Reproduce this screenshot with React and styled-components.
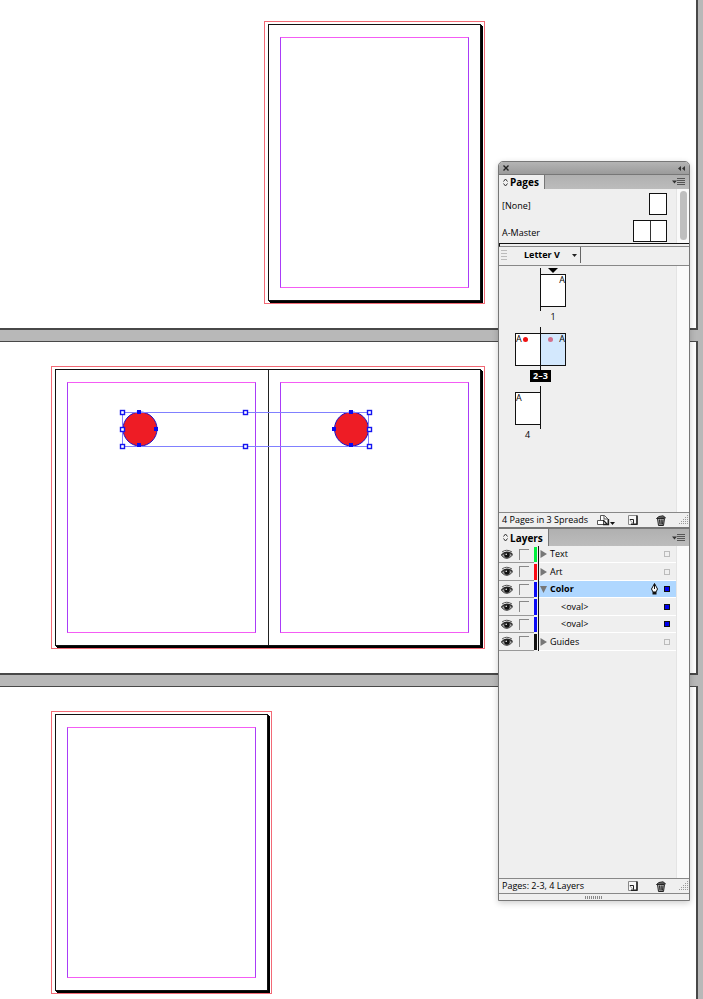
import React, { useState } from 'react';
import styled, { createGlobalStyle } from 'styled-components';

const GlobalStyle = createGlobalStyle`
  * {
    box-sizing: border-box;
  }

  body {
    margin: 0;
    background: #b8b8b8;
    color: #000;
    font-family: "Open Sans", "Noto Sans", sans-serif;
    font-size: 9px;
    line-height: 12px;
  }

  button, select {
    margin: 0;
    padding: 0;
    border: 0;
    background: none;
    color: inherit;
    font: inherit;
  }

  ul {
    margin: 0;
    padding: 0;
    list-style: none;
  }

  svg {
    display: block;
  }
`;

const Workspace = styled.div`
  position: relative;
  height: 100vh;
  overflow: hidden;
`;

const Pasteboards = styled.main`
  display: flex;
  flex-direction: column;
  gap: 11px;
  margin-right: 5px;
`;

const Pasteboard = styled.section`
  display: grid;
  grid-template-columns: 213px 213px;
  padding: ${({ $first }) => ($first ? '21px' : '24px')} 0 24px 51px;
  background: #fff;
  border: solid #484848;
  border-width: ${({ $first }) => ($first ? '0' : '1px')} 2px 2px 0;
`;

const Bleed = styled.div`
  grid-column: ${({ $column }) => $column};
  justify-self: start;
  display: flex;
  padding: 2px 3px;
  border: 1px solid #f26a76;
`;

const Spread = styled.div`
  display: flex;
  border: 1px solid #111;
  box-shadow: 1px 1px 0 #000, 2px 2px 0 #000;
`;

const Page = styled.div`
  padding: 12px 11px;

  & + & {
    border-left: 1px solid #222;
    margin-left: 1px;
  }
`;

const Margins = styled.div`
  width: 189px;
  height: 251px;
  border: 1px solid #f45cf4;
  border-left-color: #a93cf8;
  border-right-color: #a93cf8;
`;

const Selection = styled.svg`
  position: absolute;
  left: 118px;
  top: 407px;
`;

const Panels = styled.aside`
  position: absolute;
  top: 161px;
  right: 13px;
  width: 192px;
  background: #efefef;
  border: 1px solid #777;
  border-radius: 5px 5px 0 0;
  box-shadow: 0 2px 6px rgba(0, 0, 0, 0.2);
`;

const TitleBar = styled.header`
  display: flex;
  align-items: center;
  justify-content: space-between;
  height: 12px;
  padding: 0 4px;
  background: linear-gradient(#b4b4b4, #9b9b9b);
  border-radius: 4px 4px 0 0;
`;

const TabBar = styled.div`
  display: flex;
  align-items: stretch;
  justify-content: space-between;
  height: ${({ $tall }) => ($tall ? '19px' : '15px')};
  padding-right: 4px;
  background: linear-gradient(#b0b0b0, #bcbcbc);
  border-top: ${({ $tall }) => ($tall ? '2px' : '1px')} solid #777;
`;

const Tab = styled.button`
  display: flex;
  align-items: center;
  gap: 2px;
  padding: 0 5px 0 4px;
  background: #efefef;
  border-right: 1px solid #777;
  font-size: 10px;
  font-weight: bold;
`;

const ScrollArea = styled.div`
  display: grid;
  grid-template-columns: 1fr 13px;
  height: ${({ $height }) => $height};
`;

const Track = styled.div`
  padding: 2px 2px 3px 3px;
  background: #fafafa;
  border-left: 1px solid #e4e4e4;
`;

const Thumb = styled.div`
  width: 7px;
  height: 49px;
  border-radius: 4px;
  background: #bfbfbf;
`;

const MasterRow = styled.li`
  display: flex;
  align-items: center;
  justify-content: space-between;
  height: 27px;
  padding: 2px 9px 0 3px;
`;

const MasterName = styled.span`
  padding-top: 4px;
`;

const MasterIcon = styled.div`
  display: flex;
  background: #fff;
  border: 1px solid #111;

  span {
    width: 16px;
    height: 20px;
  }

  span + span {
    border-left: 1px solid #333;
  }
`;

const Splitter = styled.div`
  height: 4px;
  border-top: 1px solid #111;
  border-bottom: 1px solid #888;
  border-left: 1px solid #111;
`;

const SizeBar = styled.div`
  display: flex;
  align-items: center;
  height: 19px;
  padding: 0 0 2px 2px;
  border-bottom: 1px solid #888;
`;

const SizePicker = styled.label`
  display: flex;
  align-items: center;
  height: 16px;
  margin-left: 17px;
  padding-right: 3px;
  border-right: 1px solid #666;

  select {
    width: 48px;
    appearance: none;
    font-weight: bold;
    outline: 0;
  }
`;

const SpreadList = styled.ul`
  padding: 2px 0 0 16px;
`;

const SpreadItem = styled.li`
  display: grid;
  grid-template-columns: 25px 26px;
  grid-template-rows: 43px 12px;
  width: 51px;
  height: 59px;
`;

const PageCell = styled.div`
  grid-column: ${({ $recto }) => ($recto ? 2 : 1)};
  grid-row: 1;
  position: relative;
  padding: 6px 0 4px;
  border-left: ${({ $recto }) => ($recto ? '1px solid #111' : '0')};
  box-shadow: ${({ $recto }) => ($recto ? 'none' : '1px 0 0 #111')};
`;

const PageThumb = styled.div`
  display: flex;
  flex-direction: ${({ $recto }) => ($recto ? 'row-reverse' : 'row')};
  gap: ${({ $recto }) => ($recto ? '6px' : '1px')};
  height: 33px;
  line-height: 9px;
  background: ${({ $active }) => ($active ? '#d3e8fd' : '#fff')};
  border: solid #111;
  border-width: ${({ $recto }) => ($recto ? '1px 1px 1px 0' : '1px 0 1px 1px')};
`;

const Dot = styled.i`
  width: 5px;
  height: 5px;
  margin-top: 3px;
  border-radius: 50%;
  background: ${({ $color }) => $color};
`;

const StartMarker = styled.svg`
  position: absolute;
  left: 7px;
  top: 0;
`;

const SpreadLabel = styled.div`
  grid-column: ${({ $column }) => $column};
  grid-row: 2;
  justify-self: center;
  padding: 0 3px;
  line-height: 12px;
  color: ${({ $active }) => ($active ? '#fff' : '#000')};
  background: ${({ $active }) => ($active ? '#000' : 'none')};
  font-weight: ${({ $active }) => ($active ? 'bold' : 'normal')};
`;

const StatusBar = styled.footer`
  display: flex;
  align-items: center;
  height: 15px;
  padding: 0 0 0 3px;
  border-top: 1px solid #888;
`;

const Actions = styled.div`
  display: flex;
  align-items: center;
  margin-left: auto;
  gap: 13px;
`;

const TrashButton = styled.button`
  margin-left: 5px;
`;

const LayerItem = styled.li`
  display: grid;
  grid-template-columns: 35px 3px 1px 1fr;
  column-gap: 0;
  height: 17px;

  &:nth-child(even) {
    height: 18px;
  }
`;

const Toggles = styled.div`
  display: flex;
  align-items: center;
  gap: 6px;
  padding-left: 2px;
  border-bottom: 1px solid #999;
`;

const LockBox = styled.button`
  width: 10px;
  height: 11px;
  border: solid #888;
  border-width: 1px 0 0 1px;
`;

const Swatch = styled.span`
  margin: 1px 0;
  background: ${({ $color }) => $color};
`;

const Rule = styled.span`
  width: 1px;
  margin-left: 1px;
  background: #111;
`;

const LayerBody = styled.div`
  display: flex;
  align-items: center;
  gap: 3px;
  margin-left: 1px;
  padding: 0 6px 0 ${({ $child }) => ($child ? '22px' : '1px')};
  background: ${({ $selected }) => ($selected ? '#afd7ff' : '#efefef')};
  border-bottom: 1px solid #fff;
  font-weight: ${({ $selected }) => ($selected ? 'bold' : 'normal')};
`;

const LayerName = styled.span`
  flex: 1;
`;

const Target = styled.button`
  width: 6px;
  height: 6px;
  margin-left: 3px;
  background: ${({ $filled }) => ($filled ? '#0000f0' : '#efefef')};
  border: 1px solid ${({ $filled }) => ($filled ? '#111' : '#bbb')};
`;

const PanelGrip = styled.div`
  display: flex;
  align-items: center;
  justify-content: center;
  height: 7px;
  border-top: 1px solid #888;
`;

const SortIcon = () => (
  <svg width="5" height="9" viewBox="0 0 5 9" fill="none" stroke="#333">
    <path d="M0.5 3.5L2.5 1L4.5 3.5M0.5 5.5L2.5 8L4.5 5.5" />
  </svg>
);

const MenuIcon = () => (
  <svg width="13" height="8" viewBox="0 0 13 8">
    <path d="M0 2.5h5L2.5 5.5z" fill="#333" />
    <path d="M5 0.5h8M5 2.5h8M5 4.5h8M5 6.5h8" stroke="#555" />
  </svg>
);

const EyeIcon = () => (
  <svg width="12" height="11" viewBox="0 0 12 11" fill="none">
    <path d="M1 3Q5.500 -0.500 11 3" stroke="#555" />
    <path d="M0.500 6Q5.500 0.500 11.500 5.500" stroke="#222" strokeWidth="1.400" />
    <path d="M0.500 6.500Q6 12.500 11.500 6Q6 1.500 0.500 6.500z" fill="#aaa" stroke="#444" />
    <circle cx="6" cy="6" r="2.800" fill="#111" />
    <circle cx="5.200" cy="5.200" r="0.800" fill="#fff" />
  </svg>
);

const PenIcon = () => (
  <svg width="7" height="12" viewBox="0 0 7 12">
    <path d="M3.500 0.500L0.500 6L2 9h3L6.500 6z" fill="#fff" stroke="#111" />
    <path d="M3.500 1v5" stroke="#111" />
    <path d="M1.500 9h4v2.500h-4z" fill="#111" />
  </svg>
);

const NewPageIcon = () => (
  <svg width="10" height="10" viewBox="0 0 10 10" fill="none">
    <path d="M0.500 0.500h8.500v9H0.500z" fill="#f7f7f7" stroke="#888" />
    <path d="M9 0.500v9M3 9.200h6.500" stroke="#222" strokeWidth="1.600" />
    <path d="M2 4.500h3.500v4.500" stroke="#222" />
    <path d="M1.500 4.500l3.500 4" stroke="#999" />
  </svg>
);

const EditSizeIcon = () => (
  <svg width="18" height="11" viewBox="0 0 18 11" fill="none">
    <path d="M3.500 5.500v-5h4l3.500 3.500v5.500" fill="#fff" stroke="#555" />
    <path d="M0.500 5.500h6v4h-6z" fill="#fff" stroke="#555" />
    <path d="M7 0.500v3.500h3.500" stroke="#555" />
    <path d="M6 9.500h5.500V4M6 5l4 4" stroke="#222" strokeWidth="1.300" />
    <path d="M13 7h5L15.500 10z" fill="#111" />
  </svg>
);

const TrashIcon = () => (
  <svg width="10" height="11" viewBox="0 0 10 11" fill="none">
    <path d="M1.500 3.500L2.500 10.500h5l1-7z" fill="#bbb" stroke="#222" />
    <path d="M3.500 4.500l0.500 5M5.200 4.500v5M7 4.500l-0.500 5" stroke="#222" />
    <path d="M0.500 3.500L3 1.500L7 0.800l2.500 2z" fill="#777" stroke="#222" />
  </svg>
);

const ResizeIcon = () => (
  <svg width="10" height="10" viewBox="0 0 10 10" stroke="#999" strokeDasharray="1 1">
    <path d="M8.500 0v10M6.500 2v8M4.500 4v6M2.500 6v4M0.500 8v2" />
  </svg>
);

const handles = [[4, 5], [127, 5], [251, 5], [4, 22], [251, 22], [4, 39], [127, 39], [251, 39]];
const anchors = [[21, 5], [21, 38], [38, 22], [216, 22], [233, 5], [233, 38]];

const SelectedOvals = () => (
  <Selection width="256" height="44" viewBox="0 0 256 44" role="img" aria-label="Selected ovals">
    <g fill="#ee1c25" stroke="#1a10c8">
      <circle cx="22" cy="22" r="17" />
      <circle cx="233.500" cy="22" r="17" />
    </g>
    <rect x="4.500" y="5.500" width="246" height="34" fill="none" stroke="#8080ff" />
    {anchors.map(([x, y]) => (
      <rect key={`${x}-${y}`} x={x - 2} y={y - 2} width="4" height="4" fill="#0a0aee" />
    ))}
    {handles.map(([x, y]) => (
      <rect key={`${x}-${y}`} x={x - 1.5} y={y - 1.5} width="4" height="4" fill="#fff" stroke="#1414f0" strokeWidth="1.400" />
    ))}
  </Selection>
);

const spreads = [
  { label: '1', recto: {}, start: true },
  { label: '2–3', verso: { dot: '#ee1111' }, recto: { dot: '#d2708c', active: true }, active: true },
  { label: '4', verso: {} },
];

const layers = [
  { id: 1, name: 'Text', color: '#00f03c' },
  { id: 2, name: 'Art', color: '#fa0a14' },
  { id: 3, name: 'Color', color: '#0a0af5', open: true },
  { id: 4, name: '<oval>', color: '#0a0af5', child: true },
  { id: 5, name: '<oval>', color: '#0a0af5', child: true },
  { id: 6, name: 'Guides', color: '#111' },
];

const PagesPanel = () => (
  <section>
    <TabBar>
      <Tab><SortIcon />Pages</Tab>
      <button aria-label="Pages menu"><MenuIcon /></button>
    </TabBar>
    <ScrollArea $height="54px">
      <ul>
        <MasterRow>
          <MasterName>[None]</MasterName>
          <MasterIcon><span /></MasterIcon>
        </MasterRow>
        <MasterRow>
          <MasterName>A-Master</MasterName>
          <MasterIcon><span /><span /></MasterIcon>
        </MasterRow>
      </ul>
      <Track><Thumb /></Track>
    </ScrollArea>
    <Splitter />
    <SizeBar>
      <svg width="6" height="10" viewBox="0 0 6 10" stroke="#bbb">
        <path d="M0 0.500h6M0 3.500h6M0 6.500h6M0 9.500h6" />
      </svg>
      <SizePicker>
        <select aria-label="Page size" defaultValue="Letter V">
          <option>Letter V</option>
        </select>
        <svg width="5" height="3" viewBox="0 0 5 3"><path d="M0 0h5L2.500 3z" fill="#222" /></svg>
      </SizePicker>
    </SizeBar>
    <ScrollArea $height="246px">
      <SpreadList>
        {spreads.map(({ label, verso, recto, start, active }) => (
          <SpreadItem key={label}>
            {verso && (
              <PageCell>
                <PageThumb>A{verso.dot && <Dot $color={verso.dot} />}</PageThumb>
              </PageCell>
            )}
            {recto && (
              <PageCell $recto>
                {start && (
                  <StartMarker width="10" height="5" viewBox="0 0 10 5"><path d="M0 0h10L5 5z" /></StartMarker>
                )}
                <PageThumb $recto $active={recto.active}>
                  A{recto.dot && <Dot $color={recto.dot} />}
                </PageThumb>
              </PageCell>
            )}
            <SpreadLabel $active={active} $column={verso && recto ? '1 / 3' : recto ? '2' : '1'}>
              {label}
            </SpreadLabel>
          </SpreadItem>
        ))}
      </SpreadList>
      <Track />
    </ScrollArea>
    <StatusBar>
      4 Pages in 3 Spreads
      <Actions>
        <button aria-label="Edit page size"><EditSizeIcon /></button>
        <button aria-label="New page"><NewPageIcon /></button>
        <TrashButton aria-label="Delete pages"><TrashIcon /></TrashButton>
        <ResizeIcon />
      </Actions>
    </StatusBar>
  </section>
);

const LayersPanel = () => {
  const [selected, setSelected] = useState(3);

  return (
    <section>
      <TabBar $tall>
        <Tab><SortIcon />Layers</Tab>
        <button aria-label="Layers menu"><MenuIcon /></button>
      </TabBar>
      <ScrollArea $height="332px">
        <ul>
          {layers.map((layer) => (
            <LayerItem key={layer.id} onClick={() => setSelected(layer.id)}>
              <Toggles>
                <button aria-label="Toggle visibility"><EyeIcon /></button>
                <LockBox aria-label="Toggle lock" />
              </Toggles>
              <Swatch $color={layer.color} />
              <Rule />
              <LayerBody $child={layer.child} $selected={layer.id === selected}>
                {!layer.child && (
                  <button aria-label="Expand layer">
                    <svg width="7" height="8" viewBox="0 0 7 8" fill="#777">
                      <path d={layer.open ? 'M0 1h7L3.500 8z' : 'M0.500 0L7 4L0.500 8z'} />
                    </svg>
                  </button>
                )}
                <LayerName>{layer.name}</LayerName>
                {layer.id === selected && <PenIcon />}
                <Target aria-label="Select layer items" $filled={layer.open || layer.child} />
              </LayerBody>
            </LayerItem>
          ))}
        </ul>
        <Track />
      </ScrollArea>
      <StatusBar>
        Pages: 2-3, 4 Layers
        <Actions>
          <button aria-label="New layer"><NewPageIcon /></button>
          <TrashButton aria-label="Delete layer"><TrashIcon /></TrashButton>
          <ResizeIcon />
        </Actions>
      </StatusBar>
    </section>
  );
};

const App = () => (
  <Workspace>
    <GlobalStyle />
    <Pasteboards>
      <Pasteboard $first>
        <Bleed $column="2">
          <Spread><Page><Margins /></Page></Spread>
        </Bleed>
      </Pasteboard>
      <Pasteboard>
        <Bleed $column="1 / 3">
          <Spread>
            <Page><Margins /></Page>
            <Page><Margins /></Page>
          </Spread>
        </Bleed>
      </Pasteboard>
      <Pasteboard>
        <Bleed $column="1">
          <Spread><Page><Margins /></Page></Spread>
        </Bleed>
      </Pasteboard>
    </Pasteboards>
    <SelectedOvals />
    <Panels>
      <TitleBar>
        <button aria-label="Close panels">
          <svg width="6" height="6" viewBox="0 0 6 6" stroke="#222" strokeWidth="1.400"><path d="M0.500 0.500l5 5M5.500 0.500l-5 5" /></svg>
        </button>
        <button aria-label="Collapse panels">
          <svg width="7" height="5" viewBox="0 0 7 5" fill="#333"><path d="M3 0v5L0 2.500zM7 0v5L4 2.500z" /></svg>
        </button>
      </TitleBar>
      <PagesPanel />
      <LayersPanel />
      <PanelGrip>
        <svg width="18" height="3" viewBox="0 0 18 3"><path d="M0 1.500h18" stroke="#888" strokeWidth="3" strokeDasharray="1 1" /></svg>
      </PanelGrip>
    </Panels>
  </Workspace>
);

export default App;
